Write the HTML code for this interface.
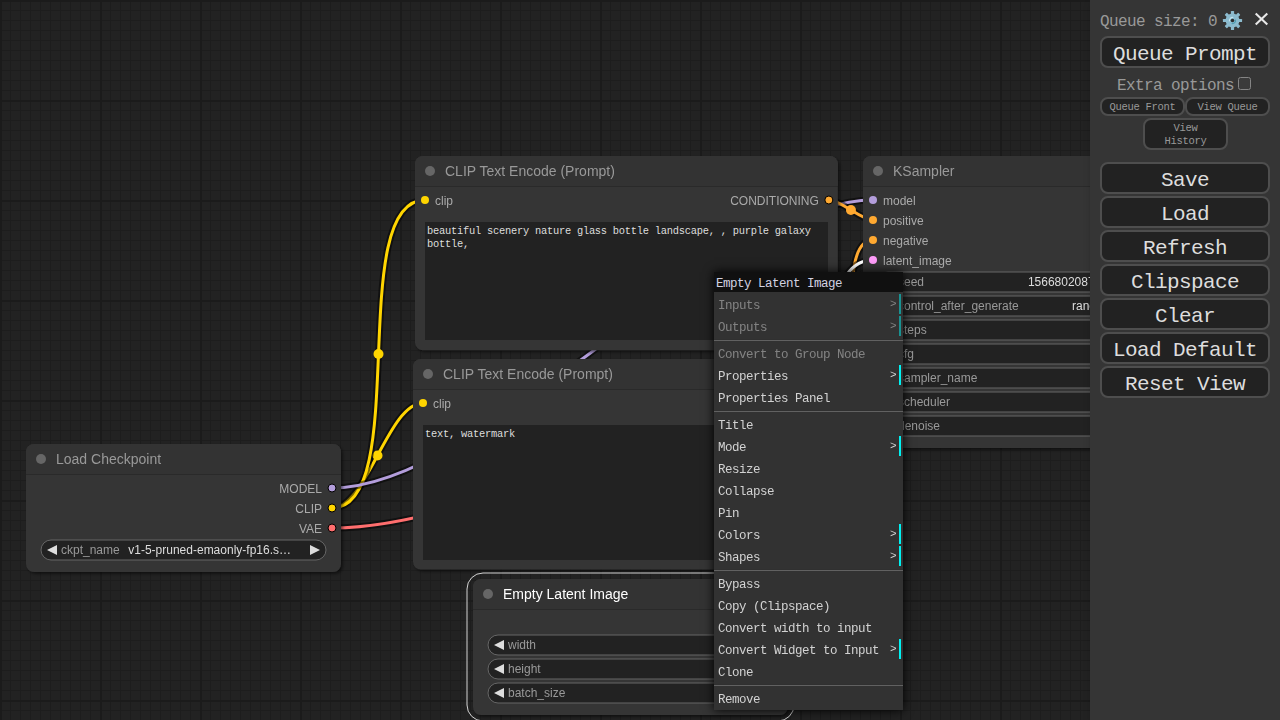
<!DOCTYPE html>
<html><head><meta charset="utf-8"><title>ComfyUI</title>
<style>
html,body{margin:0;padding:0;}
body{width:1280px;height:720px;overflow:hidden;background:#222;position:relative;font-family:"Liberation Sans",sans-serif;}
#cv{position:absolute;left:0;top:0;}
#cv text{font-family:"Liberation Sans",sans-serif;opacity:0.999;}
.ta{position:absolute;background:#222;color:#ddd;font-family:"Liberation Mono",monospace;font-size:10.4px;letter-spacing:-0.24px;line-height:13px;padding:3px 2px 2px 2px;box-sizing:border-box;white-space:pre-wrap;overflow:hidden;}
#menu{position:absolute;left:714px;top:272px;width:189px;height:438px;background:#353535;box-shadow:0 0 10px #000;filter:brightness(95%);font-family:"Liberation Mono",monospace;font-size:12.5px;line-height:16px;color:#ddd;letter-spacing:-0.5px;}
#menu .title{position:absolute;left:0;top:0;width:185px;height:14px;padding:4px 2px 2px 2px;background:#111;color:#dde;}
#menu .ent{position:absolute;left:2px;width:181px;height:14px;padding:4px 2px 2px 2px;white-space:nowrap;}
#menu .ent.sub{width:163px;padding-right:18px;border-right:2px solid cyan;}
#menu .ent.sub::after{content:">";position:absolute;top:2px;right:2.5px;font-size:11px;letter-spacing:0;}
#menu .ent.dis{opacity:0.5;}
#menu .sep{position:absolute;left:0;width:189px;height:0;border-top:1px solid #333;border-bottom:1px solid #666;}
#panel{position:absolute;left:1090px;top:0;width:190px;height:720px;background:#353535;box-shadow:3px 3px 8px rgba(0,0,0,0.4);font-family:"Liberation Mono",monospace;color:#999;}
#panel .btn{position:absolute;left:10px;width:170px;height:32px;box-sizing:border-box;border:2px solid #4e4e4e;border-radius:8px;background:#222;color:#ddd;font-size:21px;letter-spacing:-0.6px;line-height:27px;padding-top:3px;text-align:center;}
#panel .sbtn{position:absolute;box-sizing:border-box;border:2px solid #4e4e4e;border-radius:8px;background:#222;color:#999;font-size:10.5px;letter-spacing:-0.3px;text-align:center;width:85px;}
#panel .lbl{position:absolute;font-size:16px;letter-spacing:-0.6px;line-height:22px;white-space:nowrap;}
</style></head><body>
<svg id="cv" width="1280" height="720" viewBox="0 0 1280 720">
<defs>
<pattern id="grid" width="100" height="100" patternUnits="userSpaceOnUse">
<rect width="100" height="100" fill="#222"/>
<path d="M10.5,0V100M20.5,0V100M30.5,0V100M40.5,0V100M50.5,0V100M60.5,0V100M70.5,0V100M80.5,0V100M90.5,0V100M0,10.5H100M0,20.5H100M0,30.5H100M0,40.5H100M0,50.5H100M0,60.5H100M0,70.5H100M0,80.5H100M0,90.5H100" stroke="#1d1d1d" stroke-width="1" fill="none"/>
<rect x="0" y="0" width="2" height="100" fill="#1b1b1b"/>
<rect x="0" y="0" width="100" height="2" fill="#1b1b1b"/>
</pattern>
<filter id="sh" x="-5%" y="-5%" width="110%" height="115%"><feDropShadow dx="2" dy="2" stdDeviation="1.5" flood-color="#000" flood-opacity="0.5"/></filter>
</defs>
<rect width="1280" height="720" fill="url(#grid)"/>
<path d="M332.00,508.00 C366.74,508.00 388.26,403.00 423.00,403.00" fill="none" stroke="rgba(0,0,0,0.5)" stroke-width="7" stroke-linejoin="round"/>
<path d="M332.00,508.00 C366.74,508.00 388.26,403.00 423.00,403.00" fill="none" stroke="#FFD500" stroke-width="3" stroke-linejoin="round"/>
<circle cx="377.50" cy="455.50" r="5" fill="#FFD500"/>
<path d="M332.00,508.00 C412.43,508.00 344.57,200.00 425.00,200.00" fill="none" stroke="rgba(0,0,0,0.5)" stroke-width="7" stroke-linejoin="round"/>
<path d="M332.00,508.00 C412.43,508.00 344.57,200.00 425.00,200.00" fill="none" stroke="#FFD500" stroke-width="3" stroke-linejoin="round"/>
<circle cx="378.50" cy="354.00" r="5" fill="#FFD500"/>
<path d="M332.00,488.00 C485.22,488.00 719.78,200.00 873.00,200.00" fill="none" stroke="rgba(0,0,0,0.5)" stroke-width="7" stroke-linejoin="round"/>
<path d="M332.00,488.00 C485.22,488.00 719.78,200.00 873.00,200.00" fill="none" stroke="#B39DDB" stroke-width="3" stroke-linejoin="round"/>
<circle cx="602.50" cy="344.00" r="5" fill="#B39DDB"/>
<path d="M828.85,200.00 C840.97,200.00 860.88,220.00 873.00,220.00" fill="none" stroke="rgba(0,0,0,0.5)" stroke-width="7" stroke-linejoin="round"/>
<path d="M828.85,200.00 C840.97,200.00 860.88,220.00 873.00,220.00" fill="none" stroke="#FFA931" stroke-width="3" stroke-linejoin="round"/>
<circle cx="850.92" cy="210.00" r="5" fill="#FFA931"/>
<path d="M829.28,403.00 C871.47,403.00 830.81,240.00 873.00,240.00" fill="none" stroke="rgba(0,0,0,0.5)" stroke-width="7" stroke-linejoin="round"/>
<path d="M829.28,403.00 C871.47,403.00 830.81,240.00 873.00,240.00" fill="none" stroke="#FFA931" stroke-width="3" stroke-linejoin="round"/>
<circle cx="851.14" cy="321.50" r="5" fill="#FFA931"/>
<path d="M779.00,623.00 C872.74,623.00 779.26,260.00 873.00,260.00" fill="none" stroke="rgba(0,0,0,0.5)" stroke-width="7" stroke-linejoin="round"/>
<path d="M779.00,623.00 C872.74,623.00 779.26,260.00 873.00,260.00" fill="none" stroke="#FFFFFF" stroke-width="3" stroke-linejoin="round"/>
<circle cx="826.00" cy="441.50" r="5" fill="#FFFFFF"/>
<path d="M332.00,528.00 C566.57,528.00 984.43,222.00 1219.00,222.00" fill="none" stroke="rgba(0,0,0,0.5)" stroke-width="7" stroke-linejoin="round"/>
<path d="M332.00,528.00 C566.57,528.00 984.43,222.00 1219.00,222.00" fill="none" stroke="#FF6E6E" stroke-width="3" stroke-linejoin="round"/>
<circle cx="775.50" cy="375.00" r="5" fill="#FF6E6E"/>
<g transform="translate(413,389)">
<rect x="0" y="-30" width="425.28" height="210.61" rx="8" fill="#353535" filter="url(#sh)"/>
<path d="M0,0 V-22 a8,8 0 0 1 8,-8 H417.28 a8,8 0 0 1 8,8 V0 Z" fill="#333"/>
<rect x="0" y="0" width="425.28" height="1" fill="rgba(0,0,0,0.2)"/>
<circle cx="15" cy="-15" r="5" fill="#666"/>
<text x="30" y="-10" font-size="14" fill="#999">CLIP Text Encode (Prompt)</text>
<circle cx="10" cy="14.0" r="4" fill="#FFD500"/>
<text x="20" y="19.0" font-size="12" fill="#AAA">clip</text>
<circle cx="416.28" cy="14.0" r="4" fill="#FFA931" stroke="#000" stroke-width="1"/>
<text x="406.28" y="19.0" font-size="12" fill="#AAA" text-anchor="end">CONDITIONING</text>
</g>
<g transform="translate(415,186)">
<rect x="0" y="-30" width="422.85" height="194.31" rx="8" fill="#353535" filter="url(#sh)"/>
<path d="M0,0 V-22 a8,8 0 0 1 8,-8 H414.85 a8,8 0 0 1 8,8 V0 Z" fill="#333"/>
<rect x="0" y="0" width="422.85" height="1" fill="rgba(0,0,0,0.2)"/>
<circle cx="15" cy="-15" r="5" fill="#666"/>
<text x="30" y="-10" font-size="14" fill="#999">CLIP Text Encode (Prompt)</text>
<circle cx="10" cy="14.0" r="4" fill="#FFD500"/>
<text x="20" y="19.0" font-size="12" fill="#AAA">clip</text>
<circle cx="413.85" cy="14.0" r="4" fill="#FFA931" stroke="#000" stroke-width="1"/>
<text x="403.85" y="19.0" font-size="12" fill="#AAA" text-anchor="end">CONDITIONING</text>
</g>
<g transform="translate(863,186)">
<rect x="0" y="-30" width="315.00" height="292.00" rx="8" fill="#353535" filter="url(#sh)"/>
<path d="M0,0 V-22 a8,8 0 0 1 8,-8 H307.00 a8,8 0 0 1 8,8 V0 Z" fill="#333"/>
<rect x="0" y="0" width="315.00" height="1" fill="rgba(0,0,0,0.2)"/>
<circle cx="15" cy="-15" r="5" fill="#666"/>
<text x="30" y="-10" font-size="14" fill="#999">KSampler</text>
<circle cx="10" cy="14.0" r="4" fill="#B39DDB"/>
<text x="20" y="19.0" font-size="12" fill="#AAA">model</text>
<circle cx="10" cy="34.0" r="4" fill="#FFA931"/>
<text x="20" y="39.0" font-size="12" fill="#AAA">positive</text>
<circle cx="10" cy="54.0" r="4" fill="#FFA931"/>
<text x="20" y="59.0" font-size="12" fill="#AAA">negative</text>
<circle cx="10" cy="74.0" r="4" fill="#FF9CF9"/>
<text x="20" y="79.0" font-size="12" fill="#AAA">latent_image</text>
<circle cx="306.00" cy="14.0" r="4" fill="#FF9CF9" stroke="#000" stroke-width="1"/>
<text x="296.00" y="19.0" font-size="12" fill="#AAA" text-anchor="end">LATENT</text>
<rect x="15" y="86.0" width="285.00" height="20" rx="10" fill="#222" stroke="#666" stroke-width="1"/>
<path d="M31,91.0 L21,96.0 L31,101.0 Z" fill="#DDD"/>
<path d="M284.00,91.0 L294.00,96.0 L284.00,101.0 Z" fill="#DDD"/>
<text x="35" y="100.0" font-size="12" fill="#999">seed</text>
<text x="265.00" y="100.0" font-size="12" fill="#DDD" text-anchor="end">156680208700286</text>
<rect x="15" y="110.0" width="285.00" height="20" rx="10" fill="#222" stroke="#666" stroke-width="1"/>
<path d="M31,115.0 L21,120.0 L31,125.0 Z" fill="#DDD"/>
<path d="M284.00,115.0 L294.00,120.0 L284.00,125.0 Z" fill="#DDD"/>
<text x="35" y="124.0" font-size="12" fill="#999">control_after_generate</text>
<text x="265.00" y="124.0" font-size="12" fill="#DDD" text-anchor="end">randomize</text>
<rect x="15" y="134.0" width="285.00" height="20" rx="10" fill="#222" stroke="#666" stroke-width="1"/>
<path d="M31,139.0 L21,144.0 L31,149.0 Z" fill="#DDD"/>
<path d="M284.00,139.0 L294.00,144.0 L284.00,149.0 Z" fill="#DDD"/>
<text x="35" y="148.0" font-size="12" fill="#999">steps</text>
<text x="265.00" y="148.0" font-size="12" fill="#DDD" text-anchor="end">20</text>
<rect x="15" y="158.0" width="285.00" height="20" rx="10" fill="#222" stroke="#666" stroke-width="1"/>
<path d="M31,163.0 L21,168.0 L31,173.0 Z" fill="#DDD"/>
<path d="M284.00,163.0 L294.00,168.0 L284.00,173.0 Z" fill="#DDD"/>
<text x="35" y="172.0" font-size="12" fill="#999">cfg</text>
<text x="265.00" y="172.0" font-size="12" fill="#DDD" text-anchor="end">8.0</text>
<rect x="15" y="182.0" width="285.00" height="20" rx="10" fill="#222" stroke="#666" stroke-width="1"/>
<path d="M31,187.0 L21,192.0 L31,197.0 Z" fill="#DDD"/>
<path d="M284.00,187.0 L294.00,192.0 L284.00,197.0 Z" fill="#DDD"/>
<text x="35" y="196.0" font-size="12" fill="#999">sampler_name</text>
<text x="265.00" y="196.0" font-size="12" fill="#DDD" text-anchor="end">euler</text>
<rect x="15" y="206.0" width="285.00" height="20" rx="10" fill="#222" stroke="#666" stroke-width="1"/>
<path d="M31,211.0 L21,216.0 L31,221.0 Z" fill="#DDD"/>
<path d="M284.00,211.0 L294.00,216.0 L284.00,221.0 Z" fill="#DDD"/>
<text x="35" y="220.0" font-size="12" fill="#999">scheduler</text>
<text x="265.00" y="220.0" font-size="12" fill="#DDD" text-anchor="end">normal</text>
<rect x="15" y="230.0" width="285.00" height="20" rx="10" fill="#222" stroke="#666" stroke-width="1"/>
<path d="M31,235.0 L21,240.0 L31,245.0 Z" fill="#DDD"/>
<path d="M284.00,235.0 L294.00,240.0 L284.00,245.0 Z" fill="#DDD"/>
<text x="35" y="244.0" font-size="12" fill="#999">denoise</text>
<text x="265.00" y="244.0" font-size="12" fill="#DDD" text-anchor="end">1.00</text>
</g>
<g transform="translate(26,474)">
<rect x="0" y="-30" width="315.00" height="128.00" rx="8" fill="#353535" filter="url(#sh)"/>
<path d="M0,0 V-22 a8,8 0 0 1 8,-8 H307.00 a8,8 0 0 1 8,8 V0 Z" fill="#333"/>
<rect x="0" y="0" width="315.00" height="1" fill="rgba(0,0,0,0.2)"/>
<circle cx="15" cy="-15" r="5" fill="#666"/>
<text x="30" y="-10" font-size="14" fill="#999">Load Checkpoint</text>
<circle cx="306.00" cy="14.0" r="4" fill="#B39DDB" stroke="#000" stroke-width="1"/>
<text x="296.00" y="19.0" font-size="12" fill="#AAA" text-anchor="end">MODEL</text>
<circle cx="306.00" cy="34.0" r="4" fill="#FFD500" stroke="#000" stroke-width="1"/>
<text x="296.00" y="39.0" font-size="12" fill="#AAA" text-anchor="end">CLIP</text>
<circle cx="306.00" cy="54.0" r="4" fill="#FF6E6E" stroke="#000" stroke-width="1"/>
<text x="296.00" y="59.0" font-size="12" fill="#AAA" text-anchor="end">VAE</text>
<rect x="15" y="66.0" width="285.00" height="20" rx="10" fill="#222" stroke="#666" stroke-width="1"/>
<path d="M31,71.0 L21,76.0 L31,81.0 Z" fill="#DDD"/>
<path d="M284.00,71.0 L294.00,76.0 L284.00,81.0 Z" fill="#DDD"/>
<text x="35" y="80.0" font-size="12" fill="#999">ckpt_name</text>
<text x="265.00" y="80.0" font-size="12" fill="#DDD" text-anchor="end">v1-5-pruned-emaonly-fp16.s…</text>
</g>
<g transform="translate(473,609)">
<rect x="0" y="-30" width="315.00" height="136.00" rx="8" fill="#353535" filter="url(#sh)"/>
<path d="M0,0 V-22 a8,8 0 0 1 8,-8 H307.00 a8,8 0 0 1 8,8 V0 Z" fill="#333"/>
<rect x="0" y="0" width="315.00" height="1" fill="rgba(0,0,0,0.2)"/>
<circle cx="15" cy="-15" r="5" fill="#666"/>
<text x="30" y="-10" font-size="14" fill="#FFF">Empty Latent Image</text>
<rect x="-6" y="-36" width="327.00" height="148.00" rx="16" fill="none" stroke="#FFF" stroke-opacity="0.8" stroke-width="1"/>
<circle cx="306.00" cy="14.0" r="4" fill="#FF9CF9" stroke="#000" stroke-width="1"/>
<text x="296.00" y="19.0" font-size="12" fill="#AAA" text-anchor="end">LATENT</text>
<rect x="15" y="26.0" width="285.00" height="20" rx="10" fill="#222" stroke="#666" stroke-width="1"/>
<path d="M31,31.0 L21,36.0 L31,41.0 Z" fill="#DDD"/>
<path d="M284.00,31.0 L294.00,36.0 L284.00,41.0 Z" fill="#DDD"/>
<text x="35" y="40.0" font-size="12" fill="#999">width</text>
<text x="265.00" y="40.0" font-size="12" fill="#DDD" text-anchor="end">512</text>
<rect x="15" y="50.0" width="285.00" height="20" rx="10" fill="#222" stroke="#666" stroke-width="1"/>
<path d="M31,55.0 L21,60.0 L31,65.0 Z" fill="#DDD"/>
<path d="M284.00,55.0 L294.00,60.0 L284.00,65.0 Z" fill="#DDD"/>
<text x="35" y="64.0" font-size="12" fill="#999">height</text>
<text x="265.00" y="64.0" font-size="12" fill="#DDD" text-anchor="end">512</text>
<rect x="15" y="74.0" width="285.00" height="20" rx="10" fill="#222" stroke="#666" stroke-width="1"/>
<path d="M31,79.0 L21,84.0 L31,89.0 Z" fill="#DDD"/>
<path d="M284.00,79.0 L294.00,84.0 L284.00,89.0 Z" fill="#DDD"/>
<text x="35" y="88.0" font-size="12" fill="#999">batch_size</text>
<text x="265.00" y="88.0" font-size="12" fill="#DDD" text-anchor="end">1</text>
</g>
</svg>
<div class="ta" style="left:425px;top:222px;width:403px;height:118px;">beautiful scenery nature glass bottle landscape, , purple galaxy bottle,</div>
<div class="ta" style="left:423px;top:425px;width:405px;height:135px;">text, watermark</div>
<div id="menu">
<div class="title">Empty Latent Image</div>
<div class="ent dis sub" style="top:22px">Inputs</div>
<div class="ent dis sub" style="top:44px">Outputs</div>
<div class="sep" style="top:67px"></div>
<div class="ent dis" style="top:71px">Convert to Group Node</div>
<div class="ent sub" style="top:93px">Properties</div>
<div class="ent" style="top:115px">Properties Panel</div>
<div class="sep" style="top:138px"></div>
<div class="ent" style="top:142px">Title</div>
<div class="ent sub" style="top:164px">Mode</div>
<div class="ent" style="top:186px">Resize</div>
<div class="ent" style="top:208px">Collapse</div>
<div class="ent" style="top:230px">Pin</div>
<div class="ent sub" style="top:252px">Colors</div>
<div class="ent sub" style="top:274px">Shapes</div>
<div class="sep" style="top:297px"></div>
<div class="ent" style="top:301px">Bypass</div>
<div class="ent" style="top:323px">Copy (Clipspace)</div>
<div class="ent" style="top:345px">Convert width to input</div>
<div class="ent sub" style="top:367px">Convert Widget to Input</div>
<div class="ent" style="top:389px">Clone</div>
<div class="sep" style="top:412px"></div>
<div class="ent" style="top:416px">Remove</div>
</div>
<div id="panel">
<div class="lbl" style="left:10px;top:11px;">Queue size: 0</div>
<svg style="position:absolute;left:132px;top:10px" width="21" height="21" viewBox="-10.5 -10.5 21 21"><g fill="#8cbbce"><circle r="6.9"/><rect id="t" x="-1.6" y="-9.6" width="3.2" height="19.2" rx="0.6"/><use href="#t" transform="rotate(45)"/><use href="#t" transform="rotate(90)"/><use href="#t" transform="rotate(135)"/></g><circle r="3.4" fill="#86b9ce"/><path d="M-3,0.8 A3.1,3.1 0 0 1 0.8,-3" stroke="#c4e3ee" stroke-width="1.1" fill="none"/><path d="M3,-0.8 A3.1,3.1 0 0 1 -0.8,3" stroke="#4f9db0" stroke-width="1.1" fill="none"/><circle r="1.8" fill="#2b2b2b"/></svg>
<svg style="position:absolute;left:164px;top:12px" width="15" height="14" viewBox="0 0 15 14"><path d="M1.7,1.6 L13.3,12.4 M13.3,1.6 L1.7,12.4" stroke="#e8e8e8" stroke-width="2.1" fill="none"/></svg>
<div class="btn" style="top:36px">Queue Prompt</div>
<div class="lbl" style="left:27px;top:75px;">Extra options</div>
<div style="position:absolute;left:148px;top:77px;width:11px;height:11px;border:1px solid #858585;border-radius:2.5px;background:#3b3b3b;"></div>
<div class="sbtn" style="left:10px;top:97px;height:19px;line-height:15px;padding-top:1px;">Queue Front</div>
<div class="sbtn" style="left:95px;top:97px;height:19px;line-height:15px;padding-top:1px;">View Queue</div>
<div class="sbtn" style="left:53px;top:118px;height:32px;line-height:13px;padding-top:2px;">View<br>History</div>
<div class="btn" style="top:162px">Save</div>
<div class="btn" style="top:196px">Load</div>
<div class="btn" style="top:230px">Refresh</div>
<div class="btn" style="top:264px">Clipspace</div>
<div class="btn" style="top:298px">Clear</div>
<div class="btn" style="top:332px">Load Default</div>
<div class="btn" style="top:366px">Reset View</div>
</div>
</body></html>
